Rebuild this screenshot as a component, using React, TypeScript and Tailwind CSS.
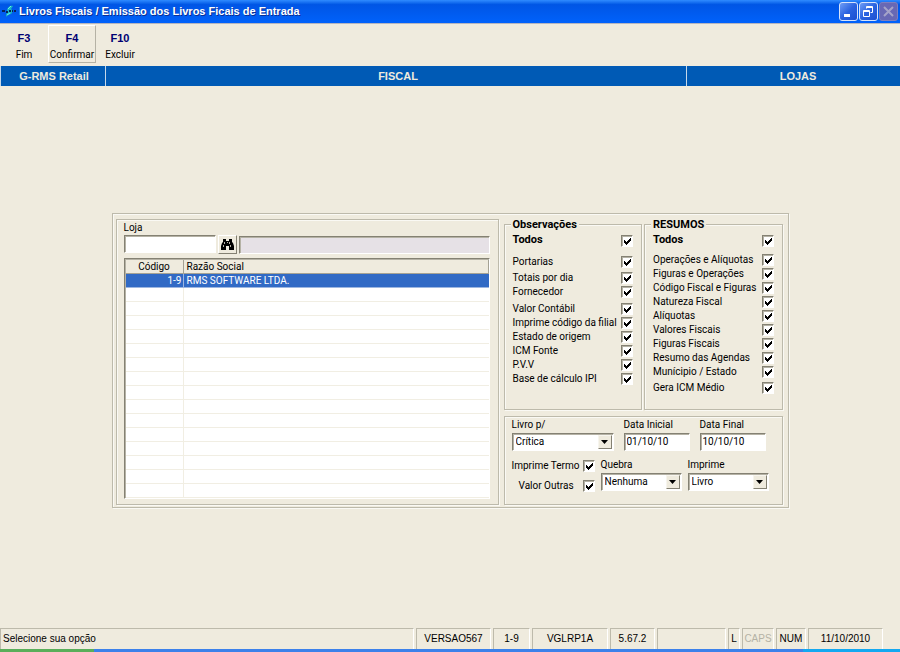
import { useState } from "react";
import type { ReactNode } from "react";
import clsx from "clsx";

const etched = "border border-[#bdbaab] shadow-[inset_1px_1px_0_#faf9f4,1px_1px_0_#faf9f4]";
const sunken =
  "border border-t-[#848173] border-l-[#848173] border-r-white border-b-white shadow-[inset_1px_1px_0_#b5b2a5]";

type Group = { className: string; items: string[] };

const observacoes: Group[] = [
  { className: "pb-[7px] text-[11px] font-bold", items: ["Todos"] },
  { className: "pb-[2px]", items: ["Portarias"] },
  { className: "pb-[3px]", items: ["Totais por dia", "Fornecedor"] },
  {
    className: "",
    items: [
      "Valor Contábil",
      "Imprime código da filial",
      "Estado de origem",
      "ICM Fonte",
      "P.V.V",
      "Base de cálculo IPI",
    ],
  },
];

const resumos: Group[] = [
  { className: "pb-[5px] text-[11px] font-bold", items: ["Todos"] },
  {
    className: "pb-[2px]",
    items: [
      "Operações e Alíquotas",
      "Figuras e Operações",
      "Código Fiscal e Figuras",
      "Natureza Fiscal",
      "Alíquotas",
      "Valores Fiscais",
      "Figuras Fiscais",
      "Resumo das Agendas",
      "Munícipio / Estado",
    ],
  },
  { className: "", items: ["Gera ICM Médio"] },
];

const toolbar = [
  { hotkey: "F3", label: "Fim", raised: false },
  { hotkey: "F4", label: "Confirmar", raised: true },
  { hotkey: "F10", label: "Excluir", raised: false },
];

const statusCells = [
  { text: "VERSAO567", className: "w-[75px]" },
  { text: "1-9", className: "w-[37px]" },
  { text: "VGLRP1A", className: "w-[76px]" },
  { text: "5.67.2", className: "w-[45px]" },
  { text: "", className: "w-[69px]" },
  { text: "L", className: "w-[12px]" },
  { text: "CAPS", className: "w-[32px] text-[#b5b2a5]" },
  { text: "NUM", className: "w-[30px]" },
  { text: "11/10/2010", className: "w-[75px]" },
];

function CheckRow({ label }: { label: string }) {
  const [checked, setChecked] = useState(true);
  return (
    <label className="flex h-[14px] items-center justify-between gap-[2px] whitespace-nowrap">
      {label}
      <span className="grid shrink-0">
        <input
          type="checkbox"
          checked={checked}
          onChange={(e) => setChecked(e.target.checked)}
          className={clsx("col-start-1 row-start-1 size-[12px] appearance-none bg-white", sunken)}
        />
        {checked && (
          <svg
            viewBox="0 0 12 12"
            shapeRendering="crispEdges"
            className="pointer-events-none col-start-1 row-start-1 size-[12px]"
          >
            <path d="M3 5h1v3H3zM4 6h1v3H4zM5 7h1v3H5zM6 6h1v3H6zM7 5h1v3H7zM8 4h1v3H8zM9 3h1v3H9z" fill="#000" />
          </svg>
        )}
      </span>
    </label>
  );
}

function CheckGroup({ title, groups }: { title: string; groups: Group[] }) {
  return (
    <fieldset className={clsx("min-w-0 flex-1 px-[8px] pb-[14px]", etched)}>
      <legend className="-ml-[2px] bg-[#efebde] px-[2px] text-[11px] leading-[12px] font-bold">{title}</legend>
      <div className="pt-[3px]">
        {groups.map((group) => (
          <div key={group.items[0]} className={group.className}>
            {group.items.map((item) => (
              <CheckRow key={item} label={item} />
            ))}
          </div>
        ))}
      </div>
    </fieldset>
  );
}

function Field({ label, className, children }: { label: string; className?: string; children: ReactNode }) {
  return (
    <label className={clsx("flex flex-col", className)}>
      <span className="h-[14px] leading-[12px]">{label}</span>
      {children}
    </label>
  );
}

function Combo({ options }: { options: string[] }) {
  return (
    <span className="grid">
      <select className={clsx("col-start-1 row-start-1 h-[18px] w-full appearance-none bg-white pl-[3px] leading-[14px]", sunken)}>
        {options.map((option) => (
          <option key={option}>{option}</option>
        ))}
      </select>
      <span className="pointer-events-none col-start-1 row-start-1 mr-[2px] flex h-[14px] w-[14px] items-center justify-center self-center justify-self-end border border-t-[#f7f5ee] border-r-[#848173] border-b-[#848173] border-l-[#f7f5ee] bg-[#efebde]">
        <svg viewBox="0 0 7 4" className="h-[4px] w-[7px]">
          <path d="M0 0h7L3.5 4z" fill="#000" />
        </svg>
      </span>
    </span>
  );
}

function TitleBar() {
  const button =
    "grid size-[19px] place-items-center rounded-[3px] border border-[#d6e3fb] bg-linear-to-br from-[#6f9cf5] via-[#2a63e0] to-[#1c4fd0]";
  return (
    <header className="flex h-[24px] items-center gap-[3px] border-b border-[#b5b6c0] bg-linear-to-b from-[#2f8bff] from-0% via-[#0055e5] via-20% to-[#0062fb] pr-[2px] pl-[2px] text-white">
      <svg viewBox="0 0 14 16" className="h-[16px] w-[14px]">
        <path d="M5 6C6 3 8 1 11 2L9 5c2 1 2 3 0 5-2 1-4 1-5 3 0-2 0-3 1-4z" fill="#17b5c8" />
        <path d="M0 7h3M4 8h2M7 7h2M10 7h1M12 7h2" stroke="#06245c" strokeWidth="2" />
        <path d="M6 5l3-3M5 11l3-2" stroke="#6df0dc" />
      </svg>
      <h1 className="flex-1 font-['Liberation_Sans',Arial,sans-serif] text-[11px] font-bold [text-shadow:1px_1px_0_#0a2f94]">
        Livros Fiscais / Emissão dos Livros Ficais de Entrada
      </h1>
      <div className="flex gap-[1px]">
        <button aria-label="Minimizar" className={button}>
          <svg viewBox="0 0 17 17" className="size-[17px]">
            <path d="M4 11h6v3H4z" fill="#fff" />
          </svg>
        </button>
        <button aria-label="Restaurar" className={button}>
          <svg viewBox="0 0 17 17" className="size-[17px]" fill="none" stroke="#fff">
            <path d="M3.5 7.5h6v6h-6zM3.5 8.5h6M6.5 5.5v-2h6v6h-2M6.5 4.5h6" />
          </svg>
        </button>
        <button
          aria-label="Fechar"
          disabled
          className="grid size-[19px] place-items-center rounded-[3px] border border-[#7f7fbc] bg-[#6868b4]"
        >
          <svg viewBox="0 0 17 17" className="size-[17px]" stroke="#a5a3c8" strokeWidth="2">
            <path d="M4 4l9 9M13 4l-9 9" />
          </svg>
        </button>
      </div>
    </header>
  );
}

function StorePanel() {
  return (
    <section className={clsx("flex flex-1 flex-col pt-[2px] pr-[8px] pb-[5px] pl-[7px]", etched)}>
      <label htmlFor="loja" className="h-[13px] leading-[12px]">
        Loja
      </label>
      <div className="flex items-start gap-[2px]">
        <input id="loja" className={clsx("h-[18px] w-[92px] bg-white px-[3px]", sunken)} />
        <button
          aria-label="Procurar loja"
          className="grid size-[19px] place-items-center border border-t-white border-r-[#848173] border-b-[#848173] border-l-white"
        >
          <svg viewBox="0 0 15 13" className="h-[13px] w-[15px]">
            <path d="M3 1h3v2h3V1h3v3l1 1 1 3v4H9V8H6v4H1V8l1-3 1-1z" fill="#000" />
            <path d="M4.5 4v2M3.5 7v2M9.5 4v2M10.5 7v2M7 4.5h1" stroke="#b8b5a8" />
          </svg>
        </button>
        <input
          aria-label="Razão social da loja"
          readOnly
          className={clsx("mt-px h-[18px] min-w-0 flex-1 bg-[#e6e1e6] px-[3px]", sunken)}
        />
      </div>
      <div className={clsx("mt-[4px] flex-1 bg-white pt-px pl-px", sunken)}>
        <table className="w-full table-fixed border-separate border-spacing-0">
          <thead>
            <tr className="bg-[#efebde]">
              <th className="h-[14px] w-[58px] border-r border-b border-[#a5a294] p-0 leading-[13px] font-normal">
                Código
              </th>
              <th className="h-[14px] border-r border-b border-[#a5a294] p-0 pl-[3px] text-left leading-[13px] font-normal">
                Razão Social
              </th>
            </tr>
          </thead>
          <tbody>
            <tr className="bg-[#316ac5] text-white">
              <td className="h-[14px] border-r border-b border-[#9db6e0] p-0 pr-px text-right leading-[13px]">1-9</td>
              <td className="h-[14px] border-b border-[#9db6e0] p-0 pl-[3px] leading-[13px]">RMS SOFTWARE LTDA.</td>
            </tr>
            {Array.from({ length: 15 }, (_, i) => (
              <tr key={i}>
                <td className="h-[14px] border-r border-b border-[#f1eee3] p-0" />
                <td className="h-[14px] border-b border-[#f1eee3] p-0" />
              </tr>
            ))}
          </tbody>
        </table>
      </div>
    </section>
  );
}

function OptionsPanel() {
  return (
    <section className={clsx("px-[7px] pt-[2px] pb-[11px]", etched)}>
      <div className="flex gap-[10px]">
        <Field label="Livro p/" className="w-[102px]">
          <Combo options={["Crítica"]} />
        </Field>
        <Field label="Data Inicial" className="w-[66px]">
          <input defaultValue="01/10/10" className={clsx("h-[18px] bg-white px-[2px]", sunken)} />
        </Field>
        <Field label="Data Final" className="w-[66px]">
          <input defaultValue="10/10/10" className={clsx("h-[18px] bg-white px-[2px]", sunken)} />
        </Field>
      </div>
      <div className="flex gap-[6px] pt-[8px]">
        <div className="flex w-[83px] flex-col gap-[6px]">
          <CheckRow label="Imprime Termo" />
          <div className="pl-[7px]">
            <CheckRow label="Valor Outras" />
          </div>
        </div>
        <Field label="Quebra" className="w-[81px]">
          <Combo options={["Nenhuma"]} />
        </Field>
        <Field label="Imprime" className="w-[81px]">
          <Combo options={["Livro"]} />
        </Field>
      </div>
    </section>
  );
}

export default function App() {
  return (
    <div className="flex min-h-screen flex-col bg-[#efebde] font-[Roboto,'Liberation_Sans',Arial,sans-serif] text-[10px] text-black">
      <TitleBar />

      <nav className="flex h-[42px] pt-px">
        {toolbar.map((item) => (
          <button
            key={item.hotkey}
            className={clsx(
              "flex h-[38px] w-[48px] flex-col items-center border pt-[5px]",
              item.raised
                ? "border-t-white border-r-[#b5b2a5] border-b-[#b5b2a5] border-l-white"
                : "border-transparent",
            )}
          >
            <span className="h-[17px] font-['Liberation_Sans',Arial,sans-serif] text-[11px] leading-[14px] font-bold text-[#000073]">
              {item.hotkey}
            </span>
            <span className="leading-[14px]">{item.label}</span>
          </button>
        ))}
      </nav>

      <div className="flex h-[20px] bg-[#005ab5] text-center font-['Liberation_Sans',Arial,sans-serif] text-[11px] leading-[20px] font-bold text-[#efebde]">
        <div className="w-[106px] border-x border-[#c5d8ea] pl-[2px]">G-RMS Retail</div>
        <div className="flex-1 border-r border-[#c5d8ea] pl-[4px]">FISCAL</div>
        <div className="w-[213px] pl-[9px]">LOJAS</div>
      </div>

      <main className="flex flex-1 items-center justify-center pt-[6px]">
        <div className={clsx("flex w-full max-w-[677px] gap-[5px] p-[3px] pr-[5px] pb-[2px]", etched)}>
          <div className="flex flex-1 pt-[2px]">
            <StorePanel />
          </div>
          <div className="flex w-[279px] flex-col gap-[6px] pt-[2px]">
            <div className="flex gap-[2px]">
              <CheckGroup title="Observações" groups={observacoes} />
              <CheckGroup title="RESUMOS" groups={resumos} />
            </div>
            <OptionsPanel />
          </div>
        </div>
      </main>

      <footer>
        <div className="flex h-[21px] gap-[2px] pr-[17px] text-center font-['Liberation_Sans',Arial,sans-serif] leading-[19px]">
          <div className="flex-1 border-t border-r border-l border-t-[#bdbaab] border-r-white border-l-[#bdbaab] pl-[2px] text-left">
            Selecione sua opção
          </div>
          {statusCells.map((cell, i) => (
            <div
              key={i}
              className={clsx(
                "border-t border-r border-l border-t-[#bdbaab] border-r-white border-l-[#bdbaab]",
                cell.className,
              )}
            >
              {cell.text}
            </div>
          ))}
        </div>
        <div className="flex h-[3px]">
          <div className="w-[94px] bg-[#5aae5a]" />
          <div className="flex-1 bg-[#3c81ea]" />
          <div className="w-[97px] bg-[#14a8f0]" />
        </div>
      </footer>
    </div>
  );
}
